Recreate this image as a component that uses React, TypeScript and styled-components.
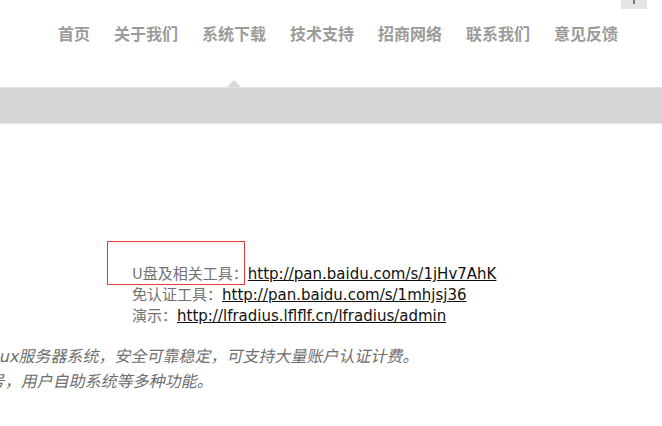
import React from 'react';
import styled, { createGlobalStyle } from 'styled-components';

const GlobalStyle = createGlobalStyle`
  html, body {
    margin: 0;
    padding: 0;
    background: #fff;
    overflow: hidden;
  }
  body {
    font-family: "DejaVu Sans", "Noto Sans CJK SC", sans-serif;
  }
`;

const Page = styled.div`
  position: relative;
  width: 662px;
  height: 426px;
  overflow: hidden;
`;

const Header = styled.header`
  height: 87px;
  display: flex;
  justify-content: flex-end;
  align-items: flex-start;
  padding: 24px 44px 0 0;
  box-sizing: border-box;
`;

const Nav = styled.nav`
  display: flex;
  gap: 24px;
`;

const NavItem = styled.a<{ $active?: boolean }>`
  position: relative;
  font-family: "Noto Sans CJK SC", sans-serif;
  font-size: 16px;
  font-weight: 700;
  line-height: 18px;
  color: #9b9b9b;
  text-decoration: none;
  white-space: nowrap;

  &::after {
    content: '';
    display: ${({ $active }) => ($active ? 'block' : 'none')};
    position: absolute;
    left: 50%;
    top: 56px;
    margin-left: -7px;
    border: 7px solid transparent;
    border-top: 0;
    border-bottom-color: #d9d9d9;
  }
`;

const TopButton = styled.div`
  position: absolute;
  top: 0;
  right: 15px;
  width: 26px;
  height: 9px;
  background: #e4e4e4;

  &::after {
    content: '';
    position: absolute;
    left: 12px;
    top: 0;
    width: 2px;
    height: 4px;
    background: #777;
  }
`;

const Band = styled.div`
  height: 35px;
  background: #d6d6d6;
  border-top: 1px solid #e2e2e2;
  border-bottom: 1px solid #e9e9e9;
`;

const Links = styled.div`
  margin: 138px 0 0 132px;
  display: flex;
  flex-direction: column;
`;

const Row = styled.div`
  height: 21px;
  display: flex;
  align-items: baseline;
  font-size: 15px;
  line-height: 21px;
  color: #727272;
  white-space: nowrap;
`;

const Label = styled.span`
  font-family: "Noto Sans CJK SC", sans-serif;
`;

const Link = styled.a`
  color: #111;
  text-decoration: underline;
`;

const Note = styled.div`
  margin-top: 19px;
  display: flex;
  flex-direction: column;
`;

const NoteLine = styled.div<{ $shift?: number }>`
  font-size: 16px;
  line-height: 25px;
  color: #6e6e6e;
  white-space: nowrap;
  margin-left: ${({ $shift }) => $shift ?? 0}px;
  transform: skewX(-12deg);
  transform-origin: 0 50%;
`;

const Marker = styled.div`
  position: absolute;
  left: 107px;
  top: 241px;
  width: 136px;
  height: 42px;
  border: 1px solid #e23a3a;
`;

const navItems = ['首页', '关于我们', '系统下载', '技术支持', '招商网络', '联系我们', '意见反馈'];

const App = () => {
  return (
    <Page>
      <GlobalStyle />
      <TopButton />
      <Header>
        <Nav>
          {navItems.map((item) => (
            <NavItem key={item} href="#" $active={item === '系统下载'}>
              {item}
            </NavItem>
          ))}
        </Nav>
      </Header>
      <Band />
      <Links>
        <Row>
          <Label>U盘及相关工具：</Label>
          <Link href="#">http://pan.baidu.com/s/1jHv7AhK</Link>
        </Row>
        <Row>
          <Label>免认证工具：</Label>
          <Link href="#">http://pan.baidu.com/s/1mhjsj36</Link>
        </Row>
        <Row>
          <Label>演示：</Label>
          <Link href="#">http://lfradius.lflflf.cn/lfradius/admin</Link>
        </Row>
      </Links>
      <Note>
        <NoteLine $shift={0}>ux服务器系统，安全可靠稳定，可支持大量账户认证计费。</NoteLine>
        <NoteLine $shift={-10}>号，用户自助系统等多种功能。</NoteLine>
      </Note>
      <Marker />
    </Page>
  );
};

export default App;
